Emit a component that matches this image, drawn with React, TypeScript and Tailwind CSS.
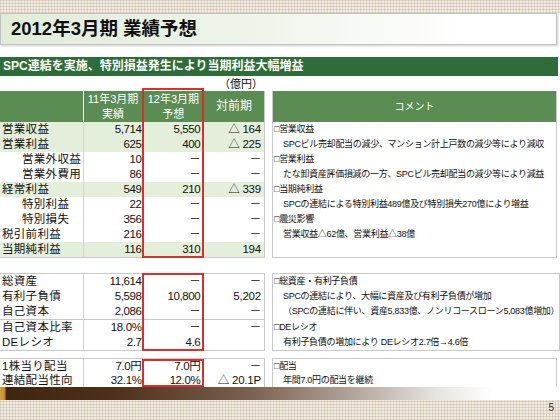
import React from "react";

type R = { label: string; indent?: boolean; a: string; b: string; c: string; green?: boolean; sep?: boolean; short?: boolean };

const sec1: R[] = [
  { label: "営業収益", a: "5,714", b: "5,550", c: "△ 164", green: true },
  { label: "営業利益", a: "625", b: "400", c: "△ 225", green: true },
  { label: "営業外収益", indent: true, a: "10", b: "－", c: "－" },
  { label: "営業外費用", indent: true, a: "86", b: "－", c: "－" },
  { label: "経常利益", a: "549", b: "210", c: "△ 339", green: true },
  { label: "特別利益", indent: true, a: "22", b: "－", c: "－" },
  { label: "特別損失", indent: true, a: "356", b: "－", c: "－" },
  { label: "税引前利益", a: "216", b: "－", c: "－" },
  { label: "当期純利益", a: "116", b: "310", c: "194", green: true },
];

const sec2: R[] = [
  { label: "総資産", a: "11,614", b: "－", c: "－" },
  { label: "有利子負債", a: "5,598", b: "10,800", c: "5,202" },
  { label: "自己資本", a: "2,086", b: "－", c: "－" },
  { label: "自己資本比率", a: "18.0%", b: "－", c: "－", sep: true },
  { label: "DEレシオ", a: "2.7", b: "4.6", c: "" },
];

const sec3: R[] = [
  { label: "1株当り配当", a: "7.0円", b: "7.0円", c: "－", short: true },
  { label: "連結配当性向", a: "32.1%", b: "12.0%", c: "△ 20.1P", short: true },
];

function Row({ r }: { r: R }) {
  return (
    <div
      className={`flex items-center text-[11.5px] leading-none text-[#111] ${r.short ? "h-[14px]" : "h-[15px]"} ${
        r.green ? "bg-[#e3eedb]" : "bg-white"
      } ${r.sep ? "border-t border-[#c9c9c9] h-[16px]" : ""}`}
    >
      <div className={`w-[83px] h-full flex items-center ${r.indent ? "pl-[22px]" : "pl-[2px]"} tracking-[0.3px]`}>
        {r.label}
      </div>
      <div className="w-[60px] h-full flex items-center justify-end pr-[1px] border-l border-[#d2d2d2] tracking-[-0.4px]">
        {r.a}
      </div>
      <div className="w-[61px] h-full flex items-center justify-end pr-[3px] border-l border-[#d2d2d2] tracking-[-0.4px]">
        {r.b}
      </div>
      <div className="w-[61px] h-full flex items-center justify-end pr-[3px] border-l border-[#d2d2d2] tracking-[-0.2px]">
        {r.c}
      </div>
    </div>
  );
}

type L = { t: string; sub?: boolean; sep?: boolean; short?: boolean };

function Lines({ lines }: { lines: L[] }) {
  return (
    <>
      {lines.map((l, i) => (
        <div
          key={i}
          className={`flex items-center text-[9px] leading-none text-[#111] tracking-[-0.3px] whitespace-nowrap ${
            l.short ? "h-[14px]" : "h-[15px]"
          } ${l.sub ? "pl-[10px]" : "pl-[1px]"} ${l.sep ? "h-[16px]" : ""}`}
        >
          {l.t}
        </div>
      ))}
    </>
  );
}

function Texture({ h, children }: { h: string; children?: React.ReactNode }) {
  return (
    <div className={`${h} bg-[#f1ece4] relative`}>
      <div className="absolute inset-0 bg-[repeating-linear-gradient(0deg,rgba(170,150,120,0.28)_0px,rgba(170,150,120,0.28)_1px,transparent_1px,transparent_3px),repeating-linear-gradient(90deg,rgba(170,150,120,0.28)_0px,rgba(170,150,120,0.28)_1px,transparent_1px,transparent_3px)]" />
      {children}
    </div>
  );
}

export default function App() {
  return (
    <div className="w-[560px] h-[420px] overflow-hidden bg-white flex flex-col font-['Liberation_Sans','Noto_Sans_CJK_JP',sans-serif]">
      <Texture h="h-[13px]" />
      <div className="h-[32px] mr-[3px] border border-[#c2c2c2] shadow-[1px_1px_2px_rgba(0,0,0,0.2)] bg-[linear-gradient(90deg,#e1ecd8_0%,#eef4ea_45%,#fbfcfa_75%,#ffffff_85%)] flex items-center pl-[10px]">
        <span className="text-[18.5px] font-bold text-[#111] leading-none">2012年3月期 業績予想</span>
      </div>
      <div className="mt-[12px] h-[19px] mr-[2px] bg-[#2e6c39] flex items-center pl-[3px]">
        <span className="text-[12px] font-bold text-white leading-none">SPC連結を実施、特別損益発生により当期利益大幅増益</span>
      </div>
      <div className="h-[16px] flex items-center pt-[2px]">
        <div className="w-[265px] text-right pr-[2px] text-[11px] leading-none text-[#111]">（億円）</div>
      </div>

      {/* Section 1 */}
      <div className="flex gap-[7px] mr-[3px]">
        <div className="relative w-[265px] border-b border-r border-[#c9c9c9]">
          <div className="flex h-[31px] bg-[#5b8c53] text-white text-[11px] leading-[15px]">
            <div className="w-[83px]" />
            <div className="w-[60px] border-l border-white flex flex-col items-center justify-center">
              <span>11年3月期</span>
              <span>実績</span>
            </div>
            <div className="w-[61px] border-l border-white flex flex-col items-center justify-center">
              <span>12年3月期</span>
              <span>予想</span>
            </div>
            <div className="w-[61px] border-l border-white flex items-center justify-center text-[12px]">対前期</div>
          </div>
          {sec1.map((r, i) => (
            <Row key={i} r={r} />
          ))}
          <div className="absolute left-[142px] w-[62px] top-[-3px] bottom-[-1px] border-2 border-[#d8302a]" />
        </div>
        <div className="flex-1 border-b border-r border-l border-[#c9c9c9]">
          <div className="h-[31px] bg-[#5b8c53] text-white text-[10px] flex items-center justify-center">コメント</div>
          <Lines
            lines={[
              { t: "□営業収益" },
              { t: "SPCビル売却配当の減少、マンション計上戸数の減少等により減収", sub: true },
              { t: "□営業利益" },
              { t: "たな卸資産評価損減の一方、SPCビル売却配当の減少等により減益", sub: true },
              { t: "□当期純利益" },
              { t: "SPCの連結による特別利益489億及び特別損失270億により増益", sub: true },
              { t: "□震災影響" },
              { t: "営業収益△62億、営業利益△38億", sub: true },
            ]}
          />
        </div>
      </div>

      {/* Section 2 */}
      <div className="flex gap-[7px] mr-[3px] mt-[15px]">
        <div className="relative w-[265px] border-y border-r border-[#c9c9c9]">
          {sec2.map((r, i) => (
            <Row key={i} r={r} />
          ))}
          <div className="absolute left-[142px] w-[62px] top-[-1px] bottom-[-1px] border-2 border-[#d8302a]" />
        </div>
        <div className="flex-1 border border-[#c9c9c9]">
          <Lines
            lines={[
              { t: "□総資産・有利子負債" },
              { t: "SPCの連結により、大幅に資産及び有利子負債が増加", sub: true },
              { t: "（SPCの連結に伴い、資産5,833億、ノンリコースローン5,083億増加）", sub: true },
              { t: "□DEレシオ", sep: true },
              { t: "有利子負債の増加により DEレシオ2.7倍→4.6倍", sub: true },
            ]}
          />
        </div>
      </div>

      {/* Section 3 */}
      <div className="flex gap-[7px] mr-[3px] mt-[7px] h-[29px] overflow-hidden">
        <div className="relative w-[265px] border-t border-r border-[#c9c9c9]">
          {sec3.map((r, i) => (
            <Row key={i} r={r} />
          ))}
          <div className="absolute left-[142px] w-[62px] top-0 bottom-0 border-2 border-[#d8302a]" />
        </div>
        <div className="flex-1 border-t border-x border-[#c9c9c9]">
          <Lines lines={[{ t: "□配当", short: true }, { t: "年間7.0円の配当を継続", sub: true, short: true }]} />
        </div>
      </div>

      <div className="h-[13px] bg-[linear-gradient(90deg,#d0a040_0px,#c08a30_5px,#3f2511_6px,#4e3019_20%,#7a6250_45%,#b8aca3_65%,#e8e4e0_78%,#ffffff_88%)]" />
      <Texture h="h-[20px]">
        <div className="absolute right-[6px] top-[3px] text-[10px] text-[#333] leading-none">5</div>
      </Texture>
    </div>
  );
}
